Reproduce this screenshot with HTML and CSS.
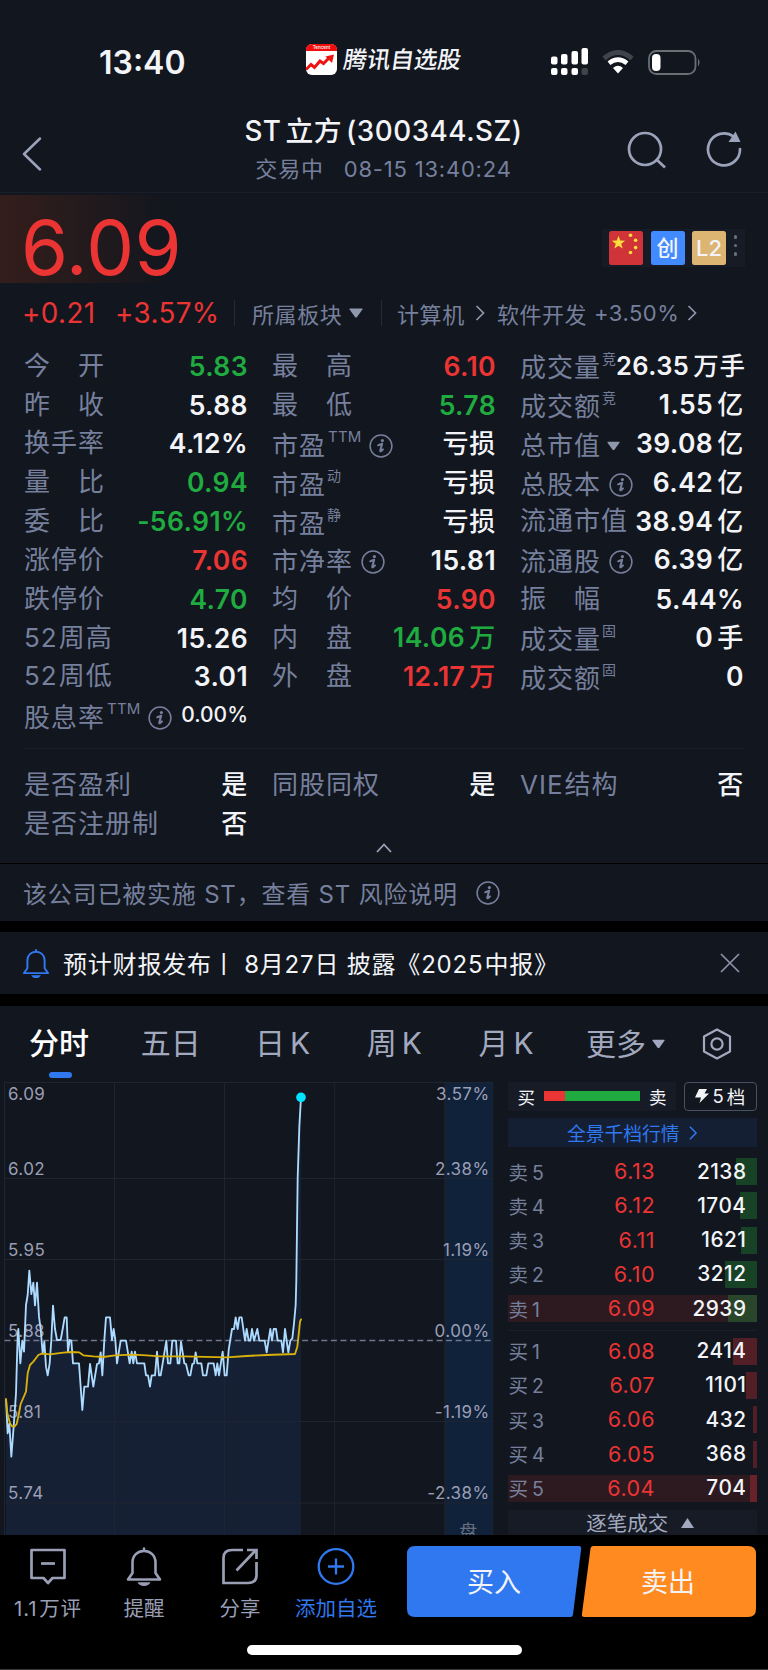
FILE: index.html
```html
<!DOCTYPE html>
<html lang="zh-CN">
<head>
  <meta charset="UTF-8" />
  <title>ST立方 (300344.SZ)</title>
  <meta name="viewport" content="width=device-width, initial-scale=1.0" />
  <link rel="stylesheet" href="styles.css">
</head>
<body>

  <svg class="defs">
    <symbol id="info" viewBox="0 0 24 24">
      <circle cx="12" cy="12" r="10.9" fill="none" stroke="currentColor" stroke-width="1.5"/>
      <circle cx="13.4" cy="6.6" r="1.6" fill="currentColor"/>
      <path d="M9.200 11.300C10.600 10.600 12 10.200 13.200 9.800L11.300 16.400C11 17.800 12 17.500 14 15.400" fill="none" stroke="currentColor" stroke-width="2" stroke-linecap="round" stroke-linejoin="round"/>
    </symbol>
    <symbol id="right" viewBox="0 0 10 18">
      <path d="M1.5 2L8.5 9L1.5 16" fill="none" stroke="currentColor" stroke-width="1.7"/>
    </symbol>
    <symbol id="down" viewBox="0 0 14 10">
      <path d="M1 .5H13Q14 .5 13.4 1.5L8 9Q7 10 6 9L.6 1.5Q0 .5 1 .5Z" fill="currentColor"/>
    </symbol>
    <symbol id="bell" viewBox="0 0 36 40">
      <path d="M18 2.500V5M6.500 27V16.500C6.500 9.500 11.500 5 18 5S29.500 9.500 29.500 16.500V27L34 33.500H2Z" fill="none" stroke="currentColor" stroke-width="2.600" stroke-linecap="round" stroke-linejoin="round"/>
      <path d="M11.500 36.200H24.500Q22.500 40 18 40T11.500 36.200Z" fill="currentColor"/>
    </symbol>
  </svg>

  <!-- Status bar -->
  <div class="status">
    <span class="status-time">13:40</span>
    <div class="status-app">
      <svg width="31" height="31" viewBox="0 0 31 31">
        <rect width="31" height="31" rx="6" fill="#fff"/>
        <path d="M0 7V6Q0 0 6 0H25Q31 0 31 6V7Z" fill="#f00d0d"/>
        <text x="15.500" y="5" font-size="4.500" fill="#fff" text-anchor="middle">Tencent</text>
        <path d="M0 25.500L5 20.500L8.500 23.500L14 17L17.500 19.500L24 13" fill="none" stroke="#ee1212" stroke-width="3"/>
        <path d="M19.500 12.500L28 10.500L26 19Z" fill="#ee1212"/>
      </svg>
      <span>腾讯自选股</span>
    </div>
    <div class="status-icons">
      <svg width="37" height="28" viewBox="0 0 37 28" fill="#fff">
        <rect x="0" y="8.500" width="6.500" height="8" rx="2"/>
        <rect x="10" y="6" width="6.500" height="10.500" rx="2"/>
        <rect x="20.500" y="3" width="6.500" height="13.500" rx="2"/>
        <rect x="30.500" y="0" width="6.500" height="16.500" rx="2"/>
        <rect x="0" y="20" width="6.500" height="7" rx="2"/>
        <rect x="10" y="20" width="6.500" height="7" rx="2"/>
        <rect x="20.500" y="20" width="6.500" height="7" rx="2"/>
        <rect x="30.500" y="20" width="6.500" height="7" rx="2" fill="#3f434c"/>
      </svg>
      <svg width="32" height="24" viewBox="0 0 32 24" fill="none">
        <path d="M2 8.500Q16 -3.500 30 8.500" stroke="#3f434c" stroke-width="5"/>
        <path d="M7 13.200Q16 6 25 13.200" stroke="#fff" stroke-width="4.500"/>
        <path d="M11 18Q16 13.500 21 18L16 23.500Z" fill="#fff"/>
      </svg>
      <svg width="53" height="25" viewBox="0 0 53 25">
        <rect x="1" y="1" width="46.500" height="23" rx="7.500" fill="none" stroke="#6b6e75" stroke-width="1.800"/>
        <rect x="4" y="4" width="8.500" height="17" rx="4" fill="#fff"/>
        <path d="M50 8.500Q53 12.500 50 16.500Z" fill="#6b6e75"/>
      </svg>
    </div>
  </div>

  <!-- Header -->
  <div class="header">
    <svg class="header-back" width="20" height="34" viewBox="0 0 20 34" fill="none" stroke="#9ba3bb" stroke-width="2.500">
      <path d="M18 1.500L2 17L18 32.500" stroke-linecap="round" stroke-linejoin="round"/>
    </svg>
    <div class="header-title">
      <h1>ST<span class="gap"></span>立方<span class="gap"></span>(300344.SZ)</h1>
      <p><span>交易中</span><span>08-15 13:40:24</span></p>
    </div>
    <div class="header-actions">
      <svg width="40" height="38" viewBox="0 0 40 38" fill="none" stroke="#9ba3bb" stroke-width="2.700">
        <circle cx="18" cy="18" r="16"/>
        <path d="M29.500 28.500L38 36.500"/>
      </svg>
      <svg width="36" height="38" viewBox="0 0 36 38" fill="none" stroke="#9ba3bb" stroke-width="2.700">
        <path d="M27.500 5.500A16 16 0 1 0 34 18" stroke-linecap="round"/>
        <path d="M29.500 .5L34.500 11H22.500Z" fill="#9ba3bb" stroke="none"/>
      </svg>
    </div>
  </div>

  <!-- Price -->
  <div class="price">
    <span class="price-now">6.09</span>
    <div class="badges">
      <svg width="34" height="34" viewBox="0 0 34 34">
        <rect width="34" height="34" rx="2.500" fill="#d13438"/>
        <g fill="#fbe03b">
          <path d="M9.500 4.800L11.200 9.600L16.200 9.700L12.200 12.800L13.700 17.600L9.500 14.700L5.300 17.600L6.800 12.800L2.800 9.700L7.800 9.600Z"/>
          <circle cx="21.500" cy="4.300" r="1.800"/>
          <circle cx="26.600" cy="9.300" r="1.800"/>
          <circle cx="26.600" cy="16.600" r="1.800"/>
          <circle cx="21.500" cy="21.500" r="1.800"/>
        </g>
      </svg>
      <span class="badge badge-blue">创</span>
      <span class="badge badge-gold">L2</span>
      <span class="dots"><i></i><i></i><i></i></span>
    </div>
  </div>
  <div class="sector">
    <span class="sector-diff">+0.21</span>
    <span class="sector-pct">+3.57%</span>
    <span class="sector-name">所属板块<svg width="14" height="10"><use href="#down"/></svg></span>
    <span class="sector-link">计算机<svg width="10" height="18"><use href="#right"/></svg></span>
    <span class="sector-sub">软件开发<b>+3.50%</b><svg width="10" height="18"><use href="#right"/></svg></span>
  </div>

  <!-- Quote table -->
  <div class="quote">
    <div class="cell"><label>今　开</label><b class="green">5.83</b></div>
    <div class="cell"><label>最　高</label><b class="red">6.10</b></div>
    <div class="cell low"><label>成交量<sup>竞</sup></label><b class="tight">26.35<s>万手</s></b></div>

    <div class="cell"><label>昨　收</label><b>5.88</b></div>
    <div class="cell"><label>最　低</label><b class="green">5.78</b></div>
    <div class="cell low"><label>成交额<sup>竞</sup></label><b>1.55<s>亿</s></b></div>

    <div class="cell"><label>换手率</label><b>4.12%</b></div>
    <div class="cell low"><label>市盈<sup class="ttm">TTM</sup><svg class="info"><use href="#info"/></svg></label><b><s>亏损</s></b></div>
    <div class="cell low"><label>总市值<svg class="tri" width="13" height="10"><use href="#down"/></svg></label><b>39.08<s>亿</s></b></div>

    <div class="cell"><label>量　比</label><b class="green">0.94</b></div>
    <div class="cell low"><label>市盈<sup>动</sup></label><b><s>亏损</s></b></div>
    <div class="cell low"><label>总股本<svg class="info"><use href="#info"/></svg></label><b>6.42<s>亿</s></b></div>

    <div class="cell"><label>委　比</label><b class="green">-56.91%</b></div>
    <div class="cell low"><label>市盈<sup>静</sup></label><b><s>亏损</s></b></div>
    <div class="cell"><label>流通市值</label><b>38.94<s>亿</s></b></div>

    <div class="cell"><label>涨停价</label><b class="red">7.06</b></div>
    <div class="cell low"><label>市净率<svg class="info"><use href="#info"/></svg></label><b>15.81</b></div>
    <div class="cell low"><label>流通股<svg class="info"><use href="#info"/></svg></label><b>6.39<s>亿</s></b></div>

    <div class="cell"><label>跌停价</label><b class="green">4.70</b></div>
    <div class="cell"><label>均　价</label><b class="red">5.90</b></div>
    <div class="cell"><label>振　幅</label><b>5.44%</b></div>

    <div class="cell"><label>52<i></i>周高</label><b>15.26</b></div>
    <div class="cell"><label>内　盘</label><b class="green">14.06<s>万</s></b></div>
    <div class="cell low"><label>成交量<sup>固</sup></label><b>0<s>手</s></b></div>

    <div class="cell"><label>52<i></i>周低</label><b>3.01</b></div>
    <div class="cell"><label>外　盘</label><b class="red">12.17<s>万</s></b></div>
    <div class="cell low"><label>成交额<sup>固</sup></label><b>0</b></div>

    <div class="cell low"><label>股息率<sup class="ttm">TTM</sup><svg class="info"><use href="#info"/></svg></label><b class="small">0.00%</b></div>
  </div>
  <div class="quote quote-extra">
    <div class="cell"><label>是否盈利</label><b><s>是</s></b></div>
    <div class="cell"><label>同股同权</label><b><s>是</s></b></div>
    <div class="cell"><label>VIE<i></i>结构</label><b><s>否</s></b></div>
    <div class="cell"><label>是否注册制</label><b><s>否</s></b></div>
  </div>
  <div class="collapse">
    <svg width="16" height="10" viewBox="0 0 16 10" fill="none" stroke="#9ba3bb" stroke-width="1.800"><path d="M1 9L8 1.500L15 9"/></svg>
  </div>

  <!-- Notices -->
  <div class="risk">该公司已被实施 ST，查看 ST 风险说明<svg class="info"><use href="#info"/></svg></div>
  <div class="notice">
    <svg class="notice-bell" width="28" height="30"><use href="#bell"/></svg>
    <span>预计财报发布丨 8月27日 披露《2025<i></i>中报》</span>
    <svg class="notice-close" width="20" height="20" viewBox="0 0 20 20" stroke="#8b93ab" stroke-width="1.700"><path d="M1 1L19 19M19 1L1 19"/></svg>
  </div>

  <!-- Chart tabs -->
  <div class="tabs">
    <span class="tab active">分时</span>
    <span class="tab">五日</span>
    <span class="tab">日<i></i>K</span>
    <span class="tab">周<i></i>K</span>
    <span class="tab">月<i></i>K</span>
    <span class="tab tab-more">更多<svg width="13" height="10"><use href="#down"/></svg></span>
    <svg class="tab-gear" width="30" height="32" viewBox="0 0 30 32" fill="none" stroke="#a2a9bf" stroke-width="2.200">
      <path d="M15 1.500L28 8.500V23.500L15 30.500L2 23.500V8.500Z" stroke-linejoin="round"/>
      <circle cx="15" cy="16" r="5.600"/>
    </svg>
  </div>

  <div class="market">
    <svg class="chart" width="500" height="453" viewBox="0 0 500 453">
      <rect x="445" y="0" width="47.700" height="453" fill="#10213a"/>
      <g transform="translate(0 178) scale(.33333)" fill="none" stroke-linejoin="round">
        <path d="M18,830L18,417 23,520 28,490 34,590 41,500 48,400 53,225 55,207 61,310 67,242 72,275 78,135 83,105 88,32 94,102 100,68 105,136 111,68 117,170 122,207 128,280 133,245 138,320 143,346 149,310 154,240 159,137 165,207 171,240 182,240 188,207 194,172 200,172 204,275 209,240 214,242 219,310 237,310 247,450 253,380 264,380 270,312 280,380 291,312 297,310 302,277 307,346 313,240 318,172 330,172 336,240 341,207 346,240 351,310 362,242 378,242 389,310 395,275 400,310 405,275 411,310 433,310 438,346 444,346 450,380 455,346 465,346 471,275 477,346 482,346 488,310 499,242 504,310 511,310 517,242 528,242 533,310 538,310 543,245 553,310 558,312 566,346 571,346 577,312 582,310 587,277 592,310 604,310 609,346 619,346 625,310 641,310 647,346 652,310 657,346 668,275 674,346 680,346 686,270 696,207 702,207 707,172 713,207 718,172 725,172 735,242 740,207 746,242 751,242 756,207 762,242 772,207 778,242 794,242 800,277 811,207 816,242 821,207 828,207 833,242 844,242 849,277 855,207 865,277 871,242 877,235 882,190 887,135 889,60 893,-245 898,-400 903,-488V830Z" fill="#162034"/>
      </g>
      <g class="chart-grid">
        <path d="M4.500 0V453M114.500 0V453M224.500 0V453M334.700 0V453M445 0V453M492.700 0V453"/>
        <path d="M4.500 .5H493M4.500 96.500H493M4.500 177.500H493M4.500 339.500H493M4.500 421H493"/>
      </g>
      <g class="chart-text">
        <text x="8" y="18">6.09</text>
        <text x="8" y="92.500">6.02</text>
        <text x="8" y="174">5.95</text>
        <text x="8" y="255">5.88</text>
        <text x="8" y="336">5.81</text>
        <text x="8" y="417">5.74</text>
        <g text-anchor="end">
          <text x="489.500" y="18">3.57%</text>
          <text x="489.500" y="92.500">2.38%</text>
          <text x="489.500" y="174">1.19%</text>
          <text x="489.500" y="255">0.00%</text>
          <text x="489.500" y="336">-1.19%</text>
          <text x="489.500" y="417">-2.38%</text>
        </g>
        <text class="chart-pan" x="468.500" y="456" text-anchor="middle">盘</text>
      </g>
      <path d="M4.500 258.500H493" stroke="#6f768d" stroke-width="1.600" stroke-dasharray="6 3.600"/>
      <g transform="translate(0 178) scale(.33333)" fill="none" stroke-linejoin="round">
        <polyline stroke="#addbff" stroke-width="5.500" points="18,417 23,520 28,490 34,590 41,500 48,400 53,225 55,207 61,310 67,242 72,275 78,135 83,105 88,32 94,102 100,68 105,136 111,68 117,170 122,207 128,280 133,245 138,320 143,346 149,310 154,240 159,137 165,207 171,240 182,240 188,207 194,172 200,172 204,275 209,240 214,242 219,310 237,310 247,450 253,380 264,380 270,312 280,380 291,312 297,310 302,277 307,346 313,240 318,172 330,172 336,240 341,207 346,240 351,310 362,242 378,242 389,310 395,275 400,310 405,275 411,310 433,310 438,346 444,346 450,380 455,346 465,346 471,275 477,346 482,346 488,310 499,242 504,310 511,310 517,242 528,242 533,310 538,310 543,245 553,310 558,312 566,346 571,346 577,312 582,310 587,277 592,310 604,310 609,346 619,346 625,310 641,310 647,346 652,310 657,346 668,275 674,346 680,346 686,270 696,207 702,207 707,172 713,207 718,172 725,172 735,242 740,207 746,242 751,242 756,207 762,242 772,207 778,242 794,242 800,277 811,207 816,242 821,207 828,207 833,242 844,242 849,277 855,207 865,277 871,242 877,235 882,190 887,135 889,60 893,-245 898,-400 903,-488"/>
        <polyline stroke="#d9b10c" stroke-width="5.500" stroke-linecap="round" points="18,417 22,460 30,490 36,499 44,499 50,492 56,465 62,432 78,395 83,340 90,315 100,305 115,285 125,281 150,283 190,278 215,276 237,277 250,286 280,289 310,291 345,286 400,284 440,286 480,289 550,289 680,292 740,288 800,285 885,282 892,260 897,215 900,185 903,178"/>
        <circle cx="903" cy="-488" r="14.500" fill="#00e5ff"/>
      </g>
    </svg>

    <!-- Order book -->
    <div class="book">
      <div class="book-head">
        <div class="ratio"><span>买</span><div class="ratio-bar"><i style="width: 22%"></i></div><span>卖</span></div>
        <div class="level">
          <svg width="14" height="14" viewBox="0 0 14 14"><path d="M4 0H12L9.500 4.500H14L4.500 14L6 8.500H0Z" fill="#f2f4f8"/></svg>5<i></i>档
        </div>
      </div>
      <div class="book-full">全景千档行情<svg width="10" height="18"><use href="#right"/></svg></div>
      <div class="rows sell">
        <div class="row"><span>卖<i></i>5</span><b>6.13</b><em>2138</em><u style="width: 21px"></u></div>
        <div class="row"><span>卖<i></i>4</span><b>6.12</b><em>1704</em><u style="width: 17px"></u></div>
        <div class="row"><span>卖<i></i>3</span><b>6.11</b><em>1621</em><u style="width: 16px"></u></div>
        <div class="row"><span>卖<i></i>2</span><b>6.10</b><em>3212</em><u style="width: 32px"></u></div>
        <div class="row hot"><span>卖<i></i>1</span><b>6.09</b><em>2939</em><u style="width: 29px"></u></div>
      </div>
      <div class="rows buy">
        <div class="row"><span>买<i></i>1</span><b>6.08</b><em>2414</em><u style="width: 24px"></u></div>
        <div class="row"><span>买<i></i>2</span><b>6.07</b><em>1101</em><u style="width: 11px"></u></div>
        <div class="row"><span>买<i></i>3</span><b>6.06</b><em>432</em><u style="width: 4px"></u></div>
        <div class="row"><span>买<i></i>4</span><b>6.05</b><em>368</em><u style="width: 4px"></u></div>
        <div class="row hot"><span>买<i></i>5</span><b>6.04</b><em>704</em><u style="width: 7px"></u></div>
      </div>
      <div class="ticks">逐笔成交<svg width="13" height="10" viewBox="0 0 13 10"><path d="M6.500 0L13 10H0Z" fill="#a2a9bf"/></svg></div>
    </div>
  </div>

  <!-- Bottom bar -->
  <div class="bottom">
    <div class="bottom-item">
      <svg width="38" height="40" viewBox="0 0 38 40" fill="none" stroke="currentColor" stroke-width="2.700">
        <path d="M2.500 4H35.500V32H23.500L19 37L14.500 32H2.500Z" stroke-linejoin="round"/>
        <path d="M12 17.500H26"/>
      </svg>
      <span class="count">1.1<i></i>万评</span>
    </div>
    <div class="bottom-item">
      <svg width="36" height="40"><use href="#bell"/></svg>
      <span>提醒</span>
    </div>
    <div class="bottom-item">
      <svg width="38" height="40" viewBox="0 0 38 40" fill="none" stroke="currentColor" stroke-width="2.700">
        <path d="M22 4H11Q2.500 4 2.500 12V37H27Q35.500 37 35.500 29V16"/>
        <path d="M15.500 24.500L34 5M26 4H35.500V13"/>
      </svg>
      <span>分享</span>
    </div>
    <div class="bottom-item blue">
      <svg width="38" height="40" viewBox="0 0 38 40" fill="none" stroke="currentColor" stroke-width="2.300">
        <circle cx="19" cy="20.500" r="17.300"/>
        <path d="M11 20.500H27M19 12.500V28.500"/>
      </svg>
      <span>添加自选</span>
    </div>
    <div class="trade">
      <svg class="trade-bg" width="349" height="71" viewBox="0 0 349 71">
        <path d="M8 0H172Q174.500 0 174.200 2.500L166 68.500Q165.700 71 163.500 71H8Q0 71 0 63V8Q0 0 8 0Z" fill="#3078ef"/>
        <path d="M186 0H341Q349 0 349 8V63Q349 71 341 71H177.500Q174.600 71 174.900 68.500L183.500 2.500Q183.800 0 186 0Z" fill="#ff8a1f"/>
      </svg>
      <span>买入</span>
      <span>卖出</span>
    </div>
  </div>
  <div class="home"><i></i></div>

</body>
</html>
```

FILE: styles.css
```css
* { box-sizing: border-box; margin: 0; padding: 0; }
body {
  width: 768px;
  height: 1670px;
  overflow: hidden;
  font-family: Inter, "Noto Sans CJK SC", sans-serif;
  color: #f2f4f8;
  background: #12161e;
  white-space: nowrap;
}
i, em { font-style: normal; }
u, s { text-decoration: none; }
svg { display: block; flex: none; }
.defs { position: absolute; width: 0; height: 0; }
.red { color: #eb3434; }
.green { color: #1fab40; }

/* STATUS BAR */
.status {
  display: flex;
  align-items: center;
  height: 104px;
  padding: 20px 0 0 99px;
}
.status-time {
  width: 207px;
  font-size: 32px;
  font-weight: 600;
}
.status-app {
  display: flex;
  align-items: center;
  gap: 7px;
  width: 245px;
  margin-top: -5px;
  font-size: 23.5px;
  font-weight: 500;
}
.status-app span {
  margin-top: -4px;
  transform: skewX(-8deg);
}
.status-icons {
  display: flex;
  align-items: center;
  gap: 14px;
}

/* HEADER */
.header {
  display: flex;
  height: 89px;
  padding-left: 22px;
  border-bottom: 1px solid #191e29;
}
.header-back { margin-top: 33px; }
.header-title {
  width: 585px;
  padding-left: 98px;
  margin-top: 9px;
  text-align: center;
}
.header-title h1 {
  font-size: 27.8px;
  line-height: 36px;
  font-weight: 500;
  letter-spacing: 0.5px;
}
.gap {
  display: inline-block;
  width: 4px;
}
.header-title p {
  display: flex;
  justify-content: center;
  gap: 20px;
  margin-top: 5px;
  font-size: 22px;
  line-height: 30px;
  letter-spacing: 0.8px;
  color: #76809d;
}
.header-actions {
  display: flex;
  gap: 39px;
  margin-top: 27px;
  flex: none;
}

/* PRICE */
.price {
  display: flex;
  justify-content: space-between;
  height: 88px;
  margin-top: 2px;
  padding: 0 23px 0 21px;
  background: linear-gradient(90deg, #341e1b 0, #12161e 170px);
}
.price-now {
  font-size: 76px;
  line-height: 105px;
  letter-spacing: 0.3px;
  color: #eb3434;
}
.badges {
  display: flex;
  align-items: center;
  gap: 7.5px;
  width: 143px;
  height: 38px;
  margin-top: 34px;
  padding-left: 7px;
  background: #171b26;
}
.badge {
  width: 34px;
  height: 34px;
  border-radius: 2.5px;
  font-size: 22px;
  line-height: 34px;
  font-weight: 500;
  text-align: center;
}
.badge-blue { background: #428aff; }
.badge-gold { background: #dcb573; }
.dots {
  display: flex;
  flex-direction: column;
  gap: 5px;
  margin-bottom: 5px;
}
.dots i {
  width: 3.5px;
  height: 3.5px;
  border-radius: 50%;
  background: #6b7080;
}

/* SECTOR LINE */
.sector {
  display: flex;
  align-items: center;
  height: 60px;
  padding-left: 22px;
  font-size: 22px;
  color: #76809d;
}
.sector-diff, .sector-pct {
  font-size: 27.8px;
  letter-spacing: 0.4px;
  color: #eb3434;
}
.sector-diff { width: 93px; }
.sector-pct { width: 119px; }
.sector-name, .sector-link, .sector-sub {
  display: flex;
  align-items: center;
}
.sector-name, .sector-link {
  height: 26px;
  border-left: 1.5px solid #242a3a;
  padding-left: 17px;
  letter-spacing: 0.6px;
}
.sector-name { width: 147px; }
.sector-name svg { margin-left: 7px; color: #8f97ad; }
.sector-link { width: 116px; padding-left: 15px; }
.sector-link svg { margin-left: 10px; color: #8f97ad; }
.sector-sub { letter-spacing: 0.5px; }
.sector-sub b { margin-left: 7px; font-weight: 400; }
.sector-sub svg { margin-left: 8px; color: #8f97ad; }

/* QUOTE TABLE */
.quote {
  display: grid;
  grid-template-columns: repeat(3, 224px);
  grid-auto-rows: 38.85px;
  column-gap: 24px;
  padding: 3.3px 24px 0;
  height: 405px;
}
.cell {
  display: flex;
  justify-content: space-between;
  align-items: center;
}
.cell label {
  display: flex;
  align-items: center;
  height: 36px;
  font-size: 26px;
  line-height: 36px;
  letter-spacing: 1px;
  color: #76809d;
}
.cell.low label { margin-top: 5px; }
.cell label i, .notice i, .tab i, .row i, .level i, .bottom-item i {
  display: inline-block;
  width: 1px;
}
.cell sup {
  align-self: flex-start;
  margin-left: 1px;
  font-size: 14px;
  line-height: 18px;
  letter-spacing: 0;
}
.cell sup.ttm { margin-left: 2px; font-size: 15px; letter-spacing: 0.2px; }
.cell b {
  font-size: 26.5px;
  line-height: 36px;
  font-weight: 600;
  letter-spacing: 0.4px;
}
.cell b s {
  margin-left: 4px;
  font-size: 26px;
  font-weight: 500;
}
.cell b s:only-child { letter-spacing: 0.8px; }
.cell b.tight { font-size: 25.5px; }
.cell b.tight s { font-size: 25.5px; }
.cell b.small { font-size: 21px; font-weight: 500; letter-spacing: 0; }
.info {
  width: 24px;
  height: 24px;
  margin-left: 8px;
  color: #76809d;
}
.ttm + .info { margin-left: 7px; }
.tri { margin-left: 6px; color: #8f97ad; }
.quote-extra {
  height: 92px;
  margin: 0 24px;
  padding: 16.5px 0 0;
  border-top: 1px solid #191e29;
}
.collapse {
  display: flex;
  justify-content: center;
  height: 23px;
  padding-top: 3px;
}

/* NOTICES */
.risk {
  display: flex;
  align-items: center;
  height: 58px;
  padding-left: 23px;
  border-top: 1.5px solid #000;
  font-size: 24px;
  letter-spacing: 0.8px;
  color: #76809d;
}
.risk .info { margin-left: 18px; }
.notice {
  display: flex;
  align-items: center;
  height: 85px;
  padding: 0 28px 0 22px;
  border-top: 11px solid #000;
  border-bottom: 12px solid #000;
  font-size: 24px;
  letter-spacing: 0.8px;
}
.notice span { margin-top: -2px; }
.notice-bell { margin-right: 13px; color: #3078ef; }
.notice-close { margin-left: auto; }

/* TABS */
.tabs {
  display: flex;
  align-items: center;
  height: 76px;
  padding-left: 3px;
  font-size: 30px;
  color: #a2a9bf;
}
.tab {
  display: flex;
  justify-content: center;
  width: 111.8px;
  height: 76px;
  line-height: 75px;
}
.tab i { width: 5px; }
.tab.active {
  position: relative;
  color: #fff;
  font-weight: 500;
}
.tab.active::after {
  content: "";
  position: absolute;
  left: 46px;
  bottom: 4px;
  width: 23px;
  height: 6px;
  border-radius: 3px;
  background: #3078ef;
}
.tab-more {
  justify-content: flex-start;
  align-items: center;
  width: 140px;
  padding-left: 24px;
}
.tab-more svg { margin-left: 6px; }

/* CHART */
.market {
  display: flex;
  height: 453px;
  overflow: hidden;
}
.chart-grid path { stroke: #1e2431; fill: none; }
.chart-text {
  font-size: 17px;
  letter-spacing: 0.4px;
  fill: #9a9fb5;
}
.chart-pan { font-size: 18px; fill: #666e82; }

/* ORDER BOOK */
.book {
  width: 248.5px;
  margin-left: 8px;
}
.book-head { display: flex; justify-content: space-between; }
.ratio {
  display: flex;
  align-items: center;
  justify-content: center;
  gap: 9px;
  width: 168px;
  height: 28.5px;
  background: #171b26;
  font-size: 17.5px;
}
.ratio-bar {
  width: 96px;
  height: 10px;
  background: #1fab40;
}
.ratio-bar i {
  display: block;
  height: 10px;
  background: #eb3434;
}
.level {
  display: flex;
  align-items: center;
  justify-content: center;
  width: 73px;
  height: 28.5px;
  border: 1.5px solid #495064;
  border-radius: 4px;
  font-size: 18.5px;
}
.level i { width: 3px; }
.level svg { margin-right: 4px; }
.book-full {
  display: flex;
  align-items: center;
  justify-content: center;
  gap: 8px;
  height: 29px;
  margin: 7.5px 0 11px;
  background: #151f34;
  font-size: 18.8px;
  color: #3078ef;
}
.book-full svg { height: 16px; }
.rows {
  display: flex;
  flex-direction: column;
  gap: 7.3px;
}
.row {
  position: relative;
  display: flex;
  align-items: center;
  height: 27px;
  padding: 0 10px 1px 0.5px;
  font-size: 20.8px;
  letter-spacing: 0.5px;
}
.row.hot { background: #2d1a20; }
.row span {
  width: 66px;
  font-size: 19.5px;
  letter-spacing: 0;
  color: #76809d;
}
.row i { width: 4px; }
.row b {
  width: 80.5px;
  font-weight: 400;
  font-size: 21.5px;
  text-align: right;
  color: #eb3434;
}
.row em {
  z-index: 1;
  margin-left: auto;
  font-weight: 500;
}
.row u {
  position: absolute;
  top: 0;
  right: 0;
  height: 27px;
}
.sell u { background: #184225; }
.sell .hot u { background: #29452a; }
.buy u { background: #531f27; }
.buy .hot u { background: #692228; }
.buy {
  margin-top: 7.5px;
  padding-top: 7px;
  border-top: 1px solid #191e29;
}
.ticks {
  display: flex;
  align-items: center;
  justify-content: center;
  gap: 13px;
  height: 27px;
  line-height: 27px;
  margin-top: 8px;
  padding-left: 16px;
  background: #171b26;
  font-size: 20.5px;
  color: #a2a9bf;
}

/* BOTTOM BAR */
.bottom {
  display: flex;
  height: 97px;
  padding-top: 11px;
  background: #000;
}
.bottom-item {
  display: flex;
  flex-direction: column;
  align-items: center;
  gap: 8px;
  width: 96px;
  height: 86px;
  font-size: 20.5px;
  line-height: 30px;
  color: #9a9fb5;
}
.bottom-item i { width: 2px; }
.bottom-item .count { letter-spacing: 0.8px; }
.bottom-item.blue { color: #3078ef; }
.trade {
  position: relative;
  display: flex;
  width: 349px;
  height: 71px;
  margin-left: 23px;
  font-size: 27px;
  line-height: 73px;
}
.trade-bg { position: absolute; }
.trade span {
  position: relative;
  width: 174px;
  text-align: center;
}
.home {
  display: flex;
  justify-content: center;
  height: 38px;
  padding-top: 13px;
  background: #000;
  border-bottom: 1px solid #3a3a3a;
}
.home i {
  width: 275px;
  height: 10px;
  border-radius: 5px;
  background: #fff;
}
```
